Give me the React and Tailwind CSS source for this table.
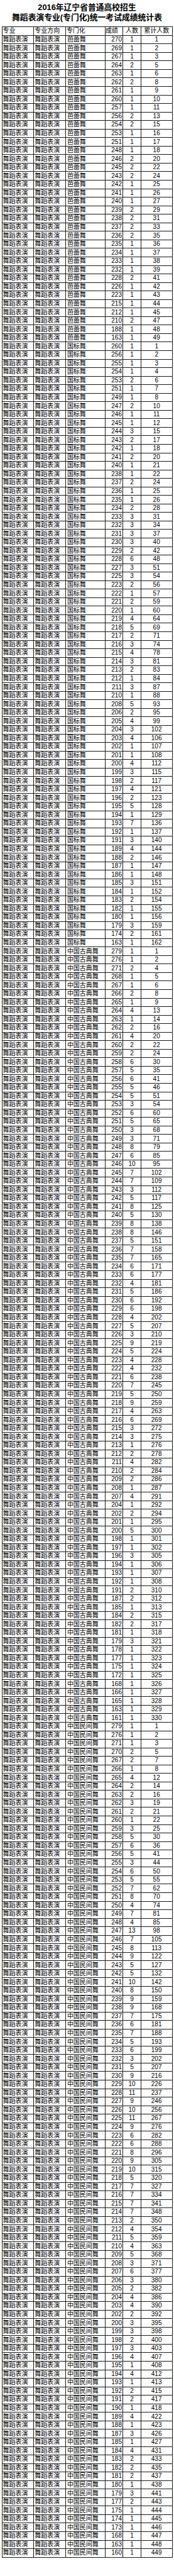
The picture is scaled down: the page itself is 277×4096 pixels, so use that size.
import React from 'react';

const groups = [
  {
    name: '芭蕾舞',
    data: '270:1 269:1 267:1 264:2 263:1 262:2 261:1 260:1 257:1 256:2 254:2 253:1 251:1 248:1 246:2 245:2 243:2 242:1 241:1 240:1 239:2 238:2 237:2 236:2 235:1 234:1 233:1 232:1 228:2 226:1 223:1 215:1 212:1 210:2 188:1 163:1',
  },
  {
    name: '国标舞',
    data: '260:1 256:1 255:1 254:1 253:2 251:1 249:1 247:2 246:1 245:1 244:3 243:2 242:1 241:2 240:1 238:1 237:2 236:1 235:1 234:2 233:3 232:3 231:3 230:3 229:2 228:6 227:3 225:3 223:2 222:1 221:2 220:1 219:4 218:5 217:2 216:3 215:4 214:3 213:2 212:1 211:3 210:1 208:5 206:2 205:4 204:3 203:4 202:1 201:1 200:4 199:3 198:2 197:4 196:2 195:5 194:1 193:7 192:1 191:3 189:4 188:2 187:1 186:1 185:3 184:1 183:2 182:1 180:1 179:3 174:2 163:1',
  },
  {
    name: '中国古典舞',
    data: '279:1 276:1 271:2 268:1 267:1 266:2 265:1 264:4 263:1 262:2 261:4 260:2 259:2 258:6 257:5 256:6 255:5 254:5 253:3 252:6 251:5 250:3 249:3 248:8 247:6 246:10 245:7 244:7 243:3 242:5 241:8 240:5 239:8 238:8 237:5 236:7 235:7 234:6 233:6 232:4 231:5 230:6 229:6 228:4 227:5 226:3 225:9 224:5 223:4 222:4 221:6 220:7 219:5 218:9 217:4 216:6 215:3 214:3 213:1 212:2 211:4 210:2 209:2 208:1 207:4 204:1 202:2 201:1 200:5 198:1 197:1 196:3 194:1 193:1 192:1 191:2 187:2 185:1 184:2 182:2 181:1 179:3 178:1 177:1 175:1 172:1 168:1 166:1 165:1 163:1 161:1',
  },
  {
    name: '中国民间舞',
    data: '279:1 276:1 271:1 270:2 267:2 266:1 265:4 264:2 263:2 262:3 261:2 260:1 259:3 258:5 257:6 256:5 255:3 254:6 253:5 252:7 251:8 250:4 249:7 248:4 247:13 246:7 245:8 244:9 243:5 242:5 241:10 240:8 239:9 238:9 237:7 236:6 235:7 234:5 233:6 232:3 231:5 230:9 229:10 228:11 227:9 226:10 225:11 224:9 223:6 222:6 221:8 220:9 219:10 218:5 217:7 216:7 215:7 214:7 213:2 212:4 211:5 210:4 209:5 208:3 207:6 206:3 205:2 204:4 203:4 202:2 200:3 199:3 198:2 197:3 196:4 195:1 194:4 193:1 192:2 191:2 190:1 189:4 188:1 187:3 185:1 184:4 183:2 182:2 181:2 180:1 179:3 177:2 175:1 174:1 173:1 168:1 163:1 160:1',
  },
];

// score:count pairs -> rows with running total per 专门化
const rows = groups.flatMap(g => {
  let total = 0;
  return g.data.split(' ').map(pair => {
    const [score, count] = pair.split(':').map(Number);
    total += count;
    return { name: g.name, score, count, total };
  });
});

const cell = 'border border-[#1a1a1a] p-0 leading-none whitespace-nowrap overflow-hidden';

const App = () => {
  return (
    <div className="w-[277px] bg-white text-black font-['Liberation_Sans','Noto_Sans_CJK_SC',sans-serif]">
      <div className="pt-[4px] text-center font-bold text-[12.8px] leading-[15.6px]">
        <p>2016年辽宁省普通高校招生</p>
        <p>舞蹈表演专业(专门化)统一考试成绩统计表</p>
      </div>
      <table className="mt-[7px] ml-[2.6px] w-[271px] table-fixed border-collapse text-[10px]">
        <colgroup>
          <col className="w-[50.7px]" />
          <col className="w-[50.6px]" />
          <col className="w-[63.1px]" />
          <col className="w-[28.5px]" />
          <col className="w-[28.3px]" />
          <col className="w-[49.8px]" />
        </colgroup>
        <thead>
          <tr className="h-[13.56px]">
            <th className={`${cell} text-left font-normal pl-[1px]`}>专业</th>
            <th className={`${cell} text-left font-normal pl-[1px]`}>专业方向</th>
            <th className={`${cell} text-left font-normal pl-[1px]`}>专门化</th>
            <th className={`${cell} text-left font-normal`}>成绩</th>
            <th className={`${cell} text-center font-normal`}>人数</th>
            <th className={`${cell} text-center font-normal`}>累计人数</th>
          </tr>
        </thead>
        <tbody>
          {rows.map((r, i) => (
            <tr key={i} className="h-[13.56px]">
              <td className={`${cell} pl-[1px]`}>舞蹈表演</td>
              <td className={`${cell} pl-[1px]`}>舞蹈表演</td>
              <td className={`${cell} pl-[2px]`}>{r.name}</td>
              <td className={`${cell} text-right pr-[1.5px]`}>{r.score}</td>
              <td className={`${cell} text-center`}>{r.count}</td>
              <td className={`${cell} text-center`}>{r.total}</td>
            </tr>
          ))}
        </tbody>
      </table>
    </div>
  );
};

export default App;
